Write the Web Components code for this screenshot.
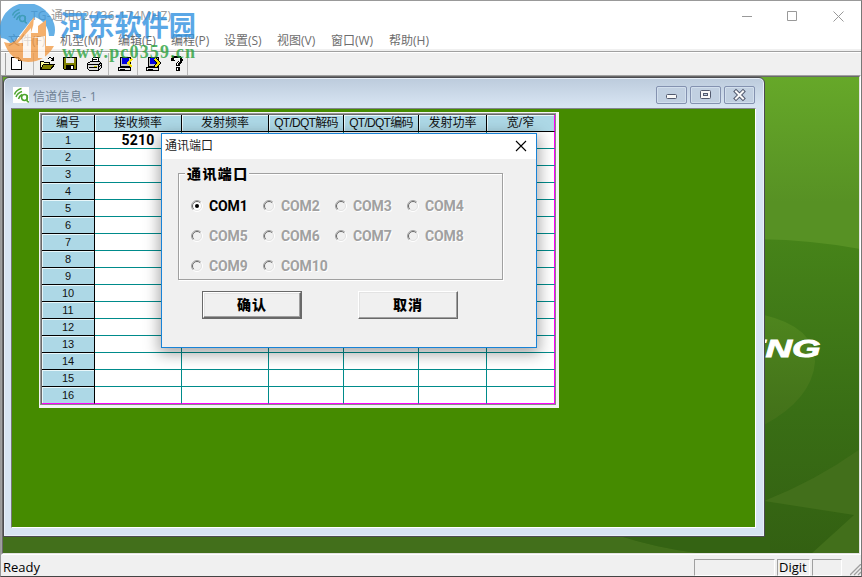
<!DOCTYPE html>
<html lang="zh-CN">
<head>
<meta charset="utf-8">
<title>TG-通用02(136-174MHZ)</title>
<style>
  body {
    margin: 0;
    overflow: hidden;
    font: 12px/16px "Open Sans", "Noto Sans CJK SC", sans-serif;
  }
</style>
</head>
<body>
<app-window>
  <title-bar slot="title">TG-通用02(136-174MHZ)</title-bar>
  <menu-bar slot="menu" items="文件(F):52 机型(M):58 编辑(E):53 编程(P):53 设置(S):53 视图(V):54 窗口(W):58 帮助(H):60"></menu-bar>
  <tool-bar slot="tools"></tool-bar>
  <mdi-area slot="body">
    <child-window caption="信道信息- 1">
      <channel-grid></channel-grid>
    </child-window>
  </mdi-area>
  <status-bar slot="status">Ready<span slot="mode">Digit</span></status-bar>
</app-window>
<port-dialog caption="通讯端口">
  <group-box label="通讯端口">
    <radio-item checked>COM1</radio-item>
    <radio-item disabled>COM2</radio-item>
    <radio-item disabled>COM3</radio-item>
    <radio-item disabled>COM4</radio-item>
    <radio-item disabled>COM5</radio-item>
    <radio-item disabled>COM6</radio-item>
    <radio-item disabled>COM7</radio-item>
    <radio-item disabled>COM8</radio-item>
    <radio-item disabled>COM9</radio-item>
    <radio-item disabled>COM10</radio-item>
  </group-box>
  <push-button slot="actions" default>确认</push-button>
  <push-button slot="actions">取消</push-button>
</port-dialog>
<site-mark></site-mark>

<script>
const define = (name, render) => {
  customElements.define(name, class extends HTMLElement {
    constructor() {
      super();
      this.attachShadow({mode: "open"});
    }

    connectedCallback() {
      this.shadowRoot.innerHTML = render(this);
    }
  });
};

const leaf = `
  <g fill="none" stroke="#4ea52f" stroke-width="1.5">
    <path d="M1.5 7.5Q3 3 8.5 1.5M3 10Q4.5 6 9 4.5M5.500 12Q6.500 9 9 7.500"/>
    <circle cx="11.500" cy="10.500" r="2.900"/>
    <path d="M14 8v5q0 2 2 2"/>
  </g>`;

define("app-window", () => `
  <style>
    :host {
      display: grid;
      isolation: isolate;
      grid-template-rows: 29px 22px 23px 480px 21px;
      box-sizing: border-box;
      width: 862px;
      height: 577px;
      border: 1px solid #999;
      border-right-color: #777;
      border-bottom-color: #444;
      background: #fff;
    }
  </style>
  <slot name="title"></slot>
  <slot name="menu"></slot>
  <slot name="tools"></slot>
  <slot name="body"></slot>
  <slot name="status"></slot>`);

define("title-bar", () => `
  <style>
    :host {
      display: flex;
      align-items: center;
      color: #999;
      padding: 0 15px 0 10px;
    }
    span { margin-left: 4px; flex: 1; white-space: nowrap; letter-spacing: .25px; }
    svg.btns { width: 106px; height: 16px; }
  </style>
  <svg width="16" height="16" viewBox="0 0 16 16">${leaf}</svg>
  <span><slot></slot></span>
  <svg class="btns" viewBox="0 0 106 16" fill="none" stroke="#999">
    <path d="M2 8.5h10M47.5 3.500h9v9h-9zM93.500 3.500l10 10M103.500 3.500l-10 10"/>
  </svg>`);

define("menu-bar", el => `
  <style>
    :host {
      display: flex;
      box-sizing: border-box;
      padding-left: 7px;
      color: #6d6d6d;
      border-bottom: 1px solid #a0a0a0;
      background: linear-gradient(#fff 19px, #f0f0f0 19px);
      line-height: 22px;
      white-space: nowrap;
    }
  </style>
  ${el.getAttribute("items").split(" ").map(item => {
    const [text, width] = item.split(":");
    return `<span style="width:${width}px">${text}</span>`;
  }).join("")}`);

const disk = `
  <path d="M3 1h10v9H3z" fill="#c0c0c0" stroke="#000"/>
  <path d="M5 2h7v6H5z" fill="#0000e0"/>
  <path d="M1.500 11.500h12v3h-12z" fill="#e0e0e0" stroke="#000"/>
  <path d="M3 13h5" stroke="#000"/>`;

const tools = [
  [8, `<path d="M2.500 1.500h7l3 3v9h-10z" fill="#fff" stroke="#000"/><path d="M9.500 1.500v3h3" fill="none" stroke="#000"/>`],
  [38, `<path d="M1.500 13.500v-8h3l1 1h5v3" fill="#ffffa0" stroke="#000"/><path d="M1.500 13.500l3-5h11l-4 5z" fill="#808000" stroke="#000"/><path d="M9 3q3-3 5 1M14.500 1v4M11.500 4.500h3" fill="none" stroke="#000"/>`],
  [61, `<path d="M1.500 1.500h13v12h-12l-1-1z" fill="#808000" stroke="#000"/><path d="M4 2h8v5H4z" fill="#e8e8e8"/><path d="M4 9h8v5H4z" fill="#000"/><path d="M9 10h2v3H9z" fill="#fff"/>`],
  [85, `<path d="M5.500 6l2-5h6l-2 5" fill="#fff" stroke="#000"/><path d="M7 3h4M6.500 5h4" stroke="#000"/><path d="M1.500 7.500l3-2h9l2 2v4l-3 3h-9l-2-2z" fill="#ddd" stroke="#000"/><path d="M1 8.500h11v5M3 11.500h8M12 9l3-2M12 12l3-3" fill="none" stroke="#000"/><path d="M8 10h3" stroke="#cc0" />`],
  [116, `${disk}<path d="M15 3l-4 4 4 4" fill="none" stroke="#f5df00" stroke-width="2.500"/>`],
  [144, `${disk}<path d="M10 3l4 4-4 4" fill="none" stroke="#000" stroke-width="4"/><path d="M10 3l4 4-4 4" fill="none" stroke="#f5df00" stroke-width="2.200"/>`],
  [168, `<path d="M4 5V3q0-2 4-2t4 3q0 2-3 4v2" fill="none" stroke="#000" stroke-width="3.500"/><path d="M5 4q0-2 3-2t3 2q0 2-3 4v1" fill="none" stroke="#fff"/><path d="M7 11h4v4H7z" fill="#000"/><path d="M8 12h1v2H8z" fill="#fff"/>`]
];

define("tool-bar", () => {
  let x = 0;
  const icons = tools.map(([left, art]) => {
    const gap = left - x;
    x = left + 16;
    return `<svg style="margin-left:${gap}px" width="16" height="16" viewBox="0 0 16 16" shape-rendering="crispEdges">${art}</svg>`;
  }).join("");
  return `
  <style>
    :host {
      display: flex;
      align-items: center;
      border-top: 1px solid #fff;
      box-sizing: border-box;
      background:
        linear-gradient(#a0a0a0, #a0a0a0) 4px 0 / 1px 100% no-repeat,
        linear-gradient(#b8b8b8, #b8b8b8) 32px 0 / 1px 100% no-repeat,
        linear-gradient(#b8b8b8, #b8b8b8) 107px 0 / 1px 100% no-repeat,
        linear-gradient(#b8b8b8, #b8b8b8) 136px 0 / 1px 100% no-repeat,
        linear-gradient(#b8b8b8, #b8b8b8) 186px 0 / 1px 100% no-repeat,
        #f0f0f0;
    }
    svg { flex: none; }
  </style>${icons}`;
});

define("mdi-area", () => `
  <style>
    :host {
      display: grid;
      box-sizing: border-box;
      border: 1px solid;
      border-color: #a0a0a0 #fff #fff #a0a0a0;
      overflow: hidden;
      background: #3a6a16;
    }
    .edge {
      display: grid;
      border: 1px solid;
      border-color: #696969 #e3e3e3 #e3e3e3 #696969;
      min-width: 0;
    }
    svg, slot { grid-area: 1 / 1; }
    slot { display: block; z-index: 1; }
    svg { width: 856px; height: 476px; }
  </style>
  <div class="edge">
    <svg viewBox="3 77 856 476">
      <defs>
        <linearGradient id="sky" x2="0" y2="1">
          <stop offset="0" stop-color="#66a829"/>
          <stop offset=".5" stop-color="#579124"/>
          <stop offset="1" stop-color="#579124"/>
        </linearGradient>
        <linearGradient id="hill" x2="0" y2="1">
          <stop offset="0" stop-color="#468319"/>
          <stop offset=".55" stop-color="#396e15"/>
          <stop offset="1" stop-color="#336012"/>
        </linearGradient>
        <linearGradient id="disc" x2="0" y2="1">
          <stop offset="0" stop-color="#4e851e"/>
          <stop offset="1" stop-color="#427019"/>
        </linearGradient>
      </defs>
      <path d="M3 77h857v250H3z" fill="url(#sky)"/>
      <path d="M700 242Q780 234 860 249V554H700z" fill="url(#hill)"/>
      <path d="M764 315Q815 327 815 362Q812 399 764 425z" fill="url(#disc)"/>
      <path d="M860 449Q815 481 764 501L854 515 811 554H860z" fill="#426f1b"/>
      <path d="M3 536H620Q660 549 706 554H3z" fill="#426f1b"/>
      <path d="M620 536H770V554H706Q660 549 620 536" fill="#346313"/>
      <text transform="translate(741 357) scale(1.600 1)" font-family="Liberation Sans" font-weight="700" font-style="italic" font-size="23" fill="#fff" stroke="#fff" stroke-width=".8">ENG</text>
    </svg>
    <slot></slot>
  </div>`);

define("child-window", el => `
  <style>
    :host {
      display: grid;
      grid-template-rows: 30px 420px;
      box-sizing: border-box;
      width: 762px;
      height: 460px;
      padding: 0 7px;
      border: 1px solid #4b4b50;
      border-radius: 6px 6px 0 0;
      background: linear-gradient(#bccbdc, #d7e4f2 28px);
      box-shadow: inset 0 0 0 1px #e8f0f8;
    }
    header {
      display: flex;
      align-items: center;
      gap: 3px;
      padding: 4px 0 0 2px;
      width: 742px;
      color: #6e8194;
    }
    .icon { background: #fff; margin-right: 1px; }
    b { font-weight: 400; flex: 1; font-size: 12px; letter-spacing: .3px; padding-top: 3px; }
    .btn {
      box-sizing: border-box;
      width: 31px;
      height: 18px;
      border: 1px solid #8492b0;
      border-radius: 2px;
      box-shadow: inset 0 0 0 1px #d2dfed;
      background: #c1d0e1;
    }
    main {
      box-sizing: border-box;
      border: 1px solid;
      border-color: #82868c #fff #fff #777;
      background: #458b00;
      padding: 3px 27px;
      width: 745px;
    }
  </style>
  <header>
    <svg class="icon" width="16" height="16" viewBox="0 0 16 16">${leaf}</svg>
    <b>${el.getAttribute("caption")}</b>
    <svg class="btn" viewBox="0 0 29 16"><rect x="9.500" y="7.500" width="10" height="4" rx="1" fill="#f8f8f8" stroke="#525a6e"/></svg>
    <svg class="btn" viewBox="0 0 29 16"><rect x="9.500" y="3.500" width="10" height="8" rx="1" fill="#f8f8f8" stroke="#525a6e"/><rect x="12.500" y="6.500" width="4" height="2" fill="#c1d0e1" stroke="#525a6e"/></svg>
    <svg class="btn" viewBox="0 0 29 16" stroke-linecap="square"><path d="M11 4.500l7 7M18 4.500l-7 7" stroke="#525a6e" stroke-width="4"/><path d="M11 4.500l7 7M18 4.500l-7 7" stroke="#fafafa" stroke-width="2"/></svg>
  </header>
  <main><slot></slot></main>`);

define("channel-grid", () => {
  const heads = ["编号", "接收频率", "发射频率", "QT/DQT解码", "QT/DQT编码", "发射功率", "宽/窄"];
  const rows = Array.from({length: 16}, (_, i) => `
    <div class="no">${i + 1}</div>
    ${heads.slice(1).map((_, c) => `<div class="cell">${i === 0 && c === 0 ? "5210" : ""}</div>`).join("")}`);
  return `
  <style>
    :host {
      display: block;
      box-sizing: border-box;
      width: 520px;
      height: 296px;
      border: solid #f4f4f4;
      border-width: 1px 3px 3px 1px;
    }
    .sunk {
      box-sizing: border-box;
      border: 1px solid;
      border-color: #999 #888 #888 #999;
      width: 516px;
      height: 292px;
    }
    .table {
      display: grid;
      grid-template-columns: 53px 87px 87px 75px 75px 68px 68px;
      grid-template-rows: 17px repeat(16, 17px);
      border-top: 1px solid #696969;
      border-left: 1px solid #696969;
      background: #fff;
    }
    .table > div {
      box-sizing: border-box;
      text-align: center;
      line-height: 17px;
      font-size: 12px;
      white-space: nowrap;
    }
    .head, .no {
      background: #add8e6;
      border: solid #000;
      border-width: 0 1px 1px 0;
      box-shadow: inset 1px 1px #e8f7fa;
      color: #111;
    }
    .head { font-family: "Liberation Sans", "Noto Sans CJK SC", sans-serif; }
    .head:nth-child(4), .head:nth-child(5) { letter-spacing: -.7px; }
    .head:nth-child(7) { border-right-color: #f0f; }
    .table > .no { font: 11px/17px "Liberation Sans", sans-serif; }
    .cell {
      border: solid #008b8b;
      border-width: 0 1px 1px 0;
    }
    .table > .cell { font: 700 14px/16px Roboto, sans-serif; letter-spacing: .2px; }
    .cell:nth-child(7n) { border-right-color: #f0f; }
    .table > :nth-last-child(-n+7) { border-bottom-color: #f0f; }
  </style>
  <div class="sunk"><div class="table">
    ${heads.map(h => `<div class="head">${h}</div>`).join("")}
    ${rows.join("")}
  </div></div>`;
});

define("status-bar", () => `
  <style>
    :host {
      display: flex;
      gap: 2px;
      padding: 4px 0 0 2px;
      box-sizing: border-box;
      background: #f0f0f0;
      color: #000;
      font-size: 13px;
      line-height: 16px;
    }
    .msg { flex: 1; }
    .pane {
      box-sizing: border-box;
      height: 17px;
      border: 1px solid;
      border-color: #a0a0a0 #fff #fff #a0a0a0;
      padding-left: 1px;
      line-height: 14px;
    }
    svg { margin-left: 6px; align-self: end; }
  </style>
  <span class="msg"><slot></slot></span>
  <span class="pane" style="width:81px"></span>
  <span class="pane" style="width:33px"><slot name="mode"></slot></span>
  <span class="pane" style="width:30px"></span>
  <svg width="11" height="12" viewBox="0 0 11 12" stroke="#a0a0a0" stroke-width="1.300"><path d="M0 11L11 0M4 11l7-7M8 11l3-3"/></svg>`);

define("port-dialog", el => `
  <style>
    :host {
      display: block;
      position: absolute;
      left: 161px;
      top: 133px;
      box-sizing: border-box;
      width: 376px;
      height: 215px;
      border: 1px solid #1883d7;
      background: #f0f0f0;
      box-shadow: 0 4px 14px 2px rgba(0, 0, 0, .35);
    }
    header {
      display: flex;
      align-items: center;
      justify-content: space-between;
      box-sizing: border-box;
      height: 25px;
      padding: 0 9px 1px 3px;
      background: #fff;
      color: #222;
    }
    main { padding: 14px 0 0 16px; }
    footer { display: flex; gap: 56px; padding: 11px 0 0 40px; }
  </style>
  <header>
    <span>${el.getAttribute("caption")}</span>
    <svg width="12" height="12" viewBox="0 0 12 12" stroke="#000" stroke-width="1.100"><path d="M1 1l10 10M11 1L1 11"/></svg>
  </header>
  <main><slot></slot></main>
  <footer><slot name="actions"></slot></footer>`);

define("group-box", el => `
  <style>
    :host {
      display: block;
      box-sizing: border-box;
      width: 325px;
      height: 107px;
      border: 1px solid #a0a0a0;
      box-shadow: 1px 1px #fff, inset 1px 1px #fff;
    }
    .label {
      display: block;
      width: max-content;
      margin: -11px 0 0 6px;
      padding: 0 0 1px 2px;
      height: 20px;
      background: #f0f0f0;
      color: #000;
      font: 900 14px/20px "Noto Sans CJK SC", sans-serif;
      letter-spacing: 1.400px;
    }
    .items {
      display: grid;
      grid-template-columns: repeat(4, 72px);
      grid-auto-rows: 30px;
      padding: 7px 0 0 12px;
    }
  </style>
  <span class="label">${el.getAttribute("label")}</span>
  <div class="items"><slot></slot></div>`);

define("radio-item", el => {
  const off = el.hasAttribute("disabled");
  return `
  <style>
    :host {
      display: flex;
      align-items: center;
      gap: 6px;
      color: ${off ? "#a0a0a0" : "#000"};
      ${off ? "text-shadow: 1px 1px #fff;" : ""}
      font: 700 14px/16px Roboto, sans-serif;
    }
    span { letter-spacing: -.1px; }
  </style>
  <svg width="12" height="12" viewBox="0 0 12 12" fill="none">
    <circle cx="6" cy="6" r="5.500" fill="${off ? "#f0f0f0" : "#fff"}" stroke="#fff"/>
    <path d="M2.100 9.900A5.500 5.500 0 0 1 9.900 2.100" stroke="#a0a0a0"/>
    <path d="M2.800 9.200A4.500 4.500 0 0 1 9.200 2.800" stroke="#696969"/>
    <path d="M2.800 9.200A4.500 4.500 0 0 0 9.200 2.800" stroke="#e3e3e3"/>
    ${el.hasAttribute("checked") ? `<circle cx="6" cy="6" r="2" fill="#000"/>` : ""}
  </svg>
  <span><slot></slot></span>`;
});

define("push-button", el => {
  const main = el.hasAttribute("default");
  return `
  <style>
    :host {
      display: block;
      box-sizing: border-box;
      width: 100px;
      height: 28px;
      ${main ? "border: 1px solid #696969;" : ""}
    }
    button {
      display: block;
      box-sizing: border-box;
      width: 100%;
      height: 100%;
      padding: 0 0 2px;
      border: 1px solid;
      border-color: #fff #696969 #696969 #fff;
      box-shadow: inset -1px -1px #a0a0a0, inset 1px 1px #e3e3e3;
      background: #f0f0f0;
      color: #000;
      font: 900 14px/20px "Noto Sans CJK SC", sans-serif;
      letter-spacing: 1px;
    }
  </style>
  <button><slot></slot></button>`;
});

define("site-mark", () => `
  <style>
    :host {
      position: absolute;
      left: 0;
      top: 4px;
      width: 200px;
      height: 60px;
      opacity: .78;
      pointer-events: none;
    }
    svg { display: block; }
  </style>
  <svg width="200" height="60" viewBox="0 4 200 60">
    <path d="M1 38A27 27 0 0 1 46 11Q38 13 30 22L18 37 11 44Q7 38 1 38z" fill="#3b9be0"/>
    <path d="M25 11Q42 2 51 17Q57 27 54 36L49 36Q48 22 35 17z" fill="#3b9be0"/>
    <path d="M4 42Q12 45 18 39L34 17Q34 25 31 33H38V26L46 20V46H54Q45 62 28 62Q10 61 4 42z" fill="#f29a45"/>
    <path d="M18 43L31 28V58H23V43zM31 38H38V58H45V36" fill="#fff" opacity=".9"/>
    <text x="60" y="36" textLength="136" lengthAdjust="spacingAndGlyphs" font-family="Noto Sans CJK SC" font-weight="700" font-size="28" fill="#2c8fdf">河东软件园</text>
    <text x="62" y="58" textLength="133" font-family="Liberation Serif" font-weight="700" font-size="18" fill="#27a03a">www.pc0359.cn</text>
  </svg>`);
</script>
</body>
</html>
